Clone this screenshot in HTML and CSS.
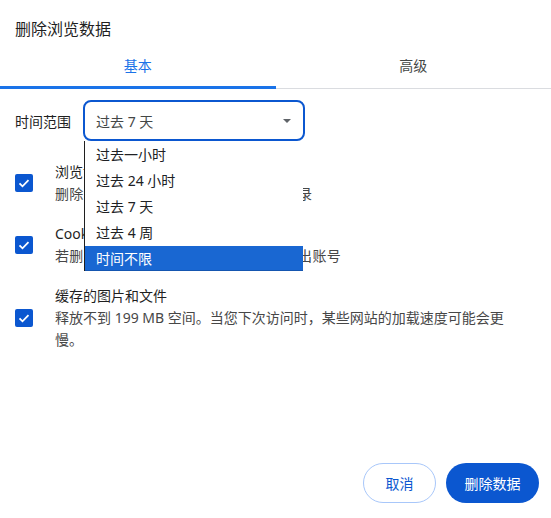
FILE: index.html
```html
<!DOCTYPE html>
<html lang="zh-CN">
<head>
<meta charset="utf-8">
<title>删除浏览数据</title>
<link rel="stylesheet" href="styles.css">
</head>
<body>
<div class="dialog">
  <h1 class="title">删除浏览数据</h1>
  <div class="tabs">
    <div class="tab active">基本</div>
    <div class="tab">高级</div>
  </div>
  <div class="content">
    <div class="range">
      <span class="range-label">时间范围</span>
      <div class="select-wrap">
        <div class="select">
          <span>过去 7 天</span>
          <span class="arrow"></span>
        </div>
        <ul class="menu">
          <li>过去一小时</li>
          <li>过去 24 小时</li>
          <li>过去 7 天</li>
          <li>过去 4 周</li>
          <li class="selected">时间不限</li>
        </ul>
      </div>
    </div>
    <div class="items">
      <div class="item">
        <span class="check"><svg viewBox="0 0 18 18" width="18" height="18"><path d="M4.5 9.3l3 3 6-6.2" fill="none" stroke="#fff" stroke-width="1.8"/></svg></span>
        <div class="text">
          <div class="item-title">浏览记录</div>
          <div class="item-sub spaced">删除已登录的所有设备上的历史浏览记录</div>
        </div>
      </div>
      <div class="item">
        <span class="check"><svg viewBox="0 0 18 18" width="18" height="18"><path d="M4.5 9.3l3 3 6-6.2" fill="none" stroke="#fff" stroke-width="1.8"/></svg></span>
        <div class="text">
          <div class="item-title">Cookie 及其他网站数据</div>
          <div class="item-sub spaced">若删除，您将退出大多数网站，不会退出账号</div>
        </div>
      </div>
      <div class="item">
        <span class="check"><svg viewBox="0 0 18 18" width="18" height="18"><path d="M4.5 9.3l3 3 6-6.2" fill="none" stroke="#fff" stroke-width="1.8"/></svg></span>
        <div class="text">
          <div class="item-title">缓存的图片和文件</div>
          <div class="item-sub wrap">释放不到 199 MB 空间。当您下次访问时，某些网站的加载速度可能会更慢。</div>
        </div>
      </div>
    </div>
  </div>
  <div class="footer">
    <button class="btn btn-outline">取消</button>
    <button class="btn btn-primary">删除数据</button>
  </div>
</div>
</body>
</html>
```
FILE: styles.css
```css
* { box-sizing: border-box; }
html, body { margin: 0; padding: 0; background: #fff; }
body {
  font-family: "Noto Sans", "Noto Sans CJK SC", sans-serif;
  color: #1f1f1f;
  font-size: 14px;
}
.dialog {
  width: 551px;
  height: 518px;
  display: flex;
  flex-direction: column;
}
.title {
  margin: 0;
  padding: 18px 15px 0;
  font-size: 16px;
  font-weight: normal;
  line-height: 22px;
  color: #1f1f1f;
}
.tabs {
  margin-top: 8px;
  display: flex;
  border-bottom: 1px solid #dadce0;
}
.tab {
  flex: 1;
  height: 40px;
  display: flex;
  align-items: center;
  justify-content: center;
  color: #444746;
  position: relative;
  padding-bottom: 6px;
}
.tab.active { color: #1a73e8; }
.tab.active::after {
  content: "";
  position: absolute;
  left: 0;
  right: 0;
  bottom: -1px;
  height: 3px;
  background: #1a73e8;
}
.content { padding: 0 15px; }
.range {
  margin-top: 11px;
  display: flex;
  align-items: center;
  gap: 12px;
}
.range-label { color: #1f1f1f; }
.select-wrap { position: relative; }
.select {
  width: 222px;
  height: 41px;
  border: 2px solid #0b57d0;
  border-radius: 8px;
  display: flex;
  align-items: center;
  justify-content: space-between;
  padding: 0 11px 0 11px;
  color: #444746;
}
.arrow {
  width: 0;
  height: 0;
  border-left: 4px solid transparent;
  border-right: 4px solid transparent;
  border-top: 4px solid #5f6368;
  margin-right: 1px;
}
.menu {
  position: absolute;
  top: 41px;
  left: 1px;
  width: 219px;
  margin: 0;
  padding: 1px 0 0;
  list-style: none;
  background: #fff;
  border-left: 1px solid #1f1f1f;
  z-index: 2;
}
.menu li {
  height: 26px;
  line-height: 26px;
  padding-left: 11px;
  color: #202124;
}
.menu li.selected {
  background: #1967d2;
  color: #fff;
  height: 25px;
  line-height: 25px;
  border-bottom: 1px solid #1556b0;
}
.items {
  margin-top: 20px;
  display: flex;
  flex-direction: column;
  gap: 18px;
}
.item {
  display: flex;
  align-items: center;
  gap: 22px;
}
.check {
  flex: none;
  width: 18px;
  height: 18px;
  border-radius: 2px;
  background: #0b57d0;
  display: block;
}
.check svg { display: block; }
.text { line-height: 22px; }
.item-title { color: #1f1f1f; }
.item-sub { color: #474747; }
.item-sub.spaced { letter-spacing: 0.3px; }
.item-sub.wrap { width: 452px; }
.footer {
  margin-top: auto;
  padding: 0 12px 15px;
  display: flex;
  justify-content: flex-end;
  gap: 10px;
}
.btn {
  height: 40px;
  border-radius: 20px;
  font-family: inherit;
  font-size: 14px;
  padding: 0;
  cursor: pointer;
}
.btn-outline {
  width: 73px;
  background: #fff;
  border: 1px solid #a8c7fa;
  color: #0b57d0;
}
.btn-primary {
  width: 93px;
  background: #0b57d0;
  border: none;
  color: #fff;
}
```
